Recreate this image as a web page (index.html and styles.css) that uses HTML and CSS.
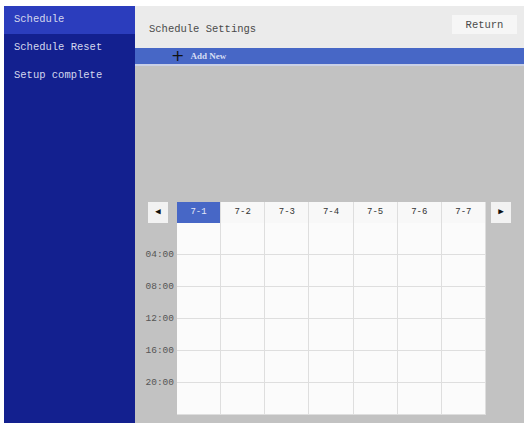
FILE: index.html
```html
<!DOCTYPE html>
<html lang="en">
<head>
<meta charset="UTF-8">
<meta name="viewport" content="width=device-width, initial-scale=1.0">
<title>Schedule Settings</title>
<link rel="stylesheet" href="styles.css">
</head>
<body>

<div class="app">
    <div class="sidebar">
        <div class="menu-item active">Schedule</div>
        <div class="menu-item">Schedule Reset</div>
        <div class="menu-item">Setup complete</div>
    </div>

    <div class="main">
        <div class="header">
            <span class="title">Schedule Settings</span>
            <button class="return-button">Return</button>
        </div>

        <div class="add-bar">
            <span class="plus">+</span>
            <span class="add-text">Add New</span>
        </div>

        <div class="content">
            <div class="calendar">
                <div class="nav-cell"><span class="arrow">&#9664;</span></div>
                <div class="day active">7-1</div>
                <div class="day">7-2</div>
                <div class="day">7-3</div>
                <div class="day">7-4</div>
                <div class="day">7-5</div>
                <div class="day">7-6</div>
                <div class="day">7-7</div>
                <div class="nav-cell"><span class="arrow">&#9654;</span></div>
            </div>

            <div class="grid-body">
                <div class="times">
                    <div class="time"><span>04:00</span></div>
                    <div class="time"><span>08:00</span></div>
                    <div class="time"><span>12:00</span></div>
                    <div class="time"><span>16:00</span></div>
                    <div class="time"><span>20:00</span></div>
                    <div class="time"></div>
                </div>
                <div class="cells" id="cells"></div>
            </div>
        </div>
    </div>
</div>

<script>
    // 7 days x 6 rows
    const cells = document.getElementById('cells');
    for (let i = 0; i < 42; i++) {
        const c = document.createElement('div');
        c.className = 'cell';
        cells.appendChild(c);
    }
</script>

</body>
</html>
```

FILE: styles.css
```css
body {
    margin: 0;
    padding: 6px 4px 3px 4px;
    font-family: "Liberation Mono", "DejaVu Sans Mono", monospace;
    background-color: white;
}
.app {
    display: flex;
    height: 417px;
}
.sidebar {
    width: 131px;
    background-color: #13208f;
    color: #d4d8ee;
    font-size: 10.5px;
}
.menu-item {
    height: 28px;
    line-height: 26px;
    padding-left: 10px;
}
.menu-item.active {
    background-color: #2b3dbd;
}
.main {
    flex: 1;
    display: flex;
    flex-direction: column;
    background-color: #c2c2c2;
}
.header {
    height: 42px;
    background-color: #ebebeb;
    display: flex;
    align-items: center;
    justify-content: space-between;
    padding: 0 7px 0 14px;
}
.title {
    font-size: 10.5px;
    color: #4a4a4a;
    margin-top: 4px;
}
.return-button {
    font-family: inherit;
    font-size: 10.5px;
    color: #4a4a4a;
    background-color: #f6f6f6;
    border: none;
    width: 65px;
    height: 19px;
    padding: 0;
    margin-top: -5px;
}
.add-bar {
    height: 16px;
    background-color: #4767c6;
    border-bottom: 2px solid #c9d0e6;
    display: flex;
    align-items: center;
    padding-left: 36px;
}
.plus {
    color: #111;
    font-size: 16px;
    font-family: "DejaVu Sans", sans-serif;
    line-height: 16px;
}
.add-text {
    color: #d8def4;
    font-size: 9px;
    font-family: "Liberation Serif", serif;
    font-weight: bold;
    margin-left: 6px;
}
.content {
    flex: 1;
    padding-top: 136px;
}
.calendar {
    display: grid;
    grid-template-columns: 42px repeat(7, 44.15px) 37px;
    height: 21px;
}
.nav-cell {
    display: flex;
    align-items: center;
}
.nav-cell:first-child {
    justify-content: flex-start;
    padding-left: 13px;
}
.nav-cell:last-child {
    padding-left: 5px;
}
.arrow {
    width: 20px;
    height: 21px;
    background-color: #f2f2f2;
    font-size: 9px;
    line-height: 21px;
    text-align: center;
    color: #111;
}
.day {
    background-color: #f8f8f8;
    border-right: 1px solid #dedede;
    font-size: 9px;
    color: #333;
    text-align: center;
    line-height: 21px;
}
.day.active {
    background-color: #4767c6;
    color: #e4e8f8;
}
.grid-body {
    display: flex;
}
.times {
    width: 42px;
}
.time {
    height: 32px;
    position: relative;
}
.time span {
    position: absolute;
    right: 3px;
    bottom: -6px;
    font-size: 9.5px;
    color: #555;
    line-height: 12px;
}
.cells {
    width: 309px;
    display: grid;
    grid-template-columns: repeat(7, 1fr);
    grid-template-rows: repeat(6, 32px);
    background-color: #fbfbfb;
}
.cell {
    border-right: 1px solid #dedede;
    border-bottom: 1px solid #dedede;
}
```
